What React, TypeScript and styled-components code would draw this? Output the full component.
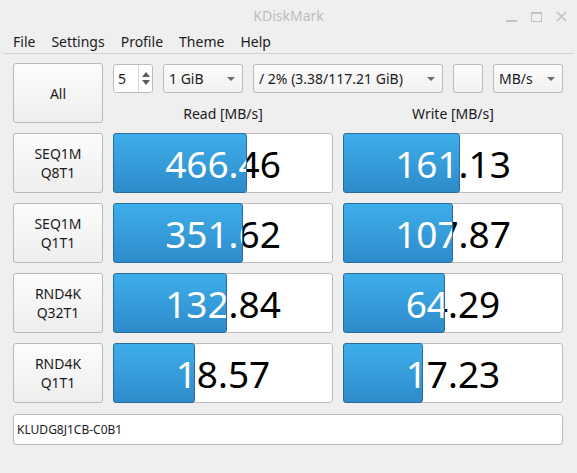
import React from 'react'
import styled, { createGlobalStyle } from 'styled-components'

const GlobalStyle = createGlobalStyle`
  html, body {
    margin: 0;
    padding: 0;
    background: #efefef;
  }
  body {
    font-family: "Noto Sans", "Open Sans", "DejaVu Sans", sans-serif;
    font-size: 14px;
    color: #232629;
  }
`

const Window = styled.div`
  width: 577px;
  height: 473px;
  background: #efefef;
  display: flex;
  flex-direction: column;
  overflow: hidden;
`

const TitleBar = styled.div`
  height: 30px;
  display: grid;
  grid-template-columns: 1fr auto 1fr;
  align-items: center;
  padding: 0 10px 0 10px;
`

const Title = styled.div`
  grid-column: 2;
  color: #bdbdbd;
  font-size: 14px;
  padding-top: 1px;
`

const WinControls = styled.div`
  justify-self: end;
  display: flex;
  gap: 14px;
  align-items: center;
  padding-top: 2px;
`

const MenuBar = styled.div`
  height: 24px;
  display: flex;
  align-items: center;
  padding-left: 2px;
  margin: 0 3px;
  border-bottom: 1px solid #d3d3d3;
  box-sizing: border-box;
`

const MenuItem = styled.div`
  padding: 0 8px;
  color: #1b1b1b;
  line-height: 24px;
`

const Content = styled.div`
  padding: 9px 14px 0 13px;
  display: flex;
  flex-direction: column;
`

const Grid = styled.div`
  display: grid;
  grid-template-columns: 90px 220px 220px;
  grid-template-rows: 30px 20px 60px 60px 60px 60px;
  column-gap: 10px;
  row-gap: 10px;
`

const PushButton = styled.div<{ $span?: number }>`
  grid-row: ${({ $span }) => ($span ? `span ${$span}` : 'auto')};
  box-sizing: border-box;
  border: 1px solid #b9b9b9;
  border-radius: 3px;
  background: linear-gradient(#fcfcfc, #eeeeee);
  display: flex;
  align-items: center;
  justify-content: center;
  text-align: center;
  line-height: 19px;
  color: #1b1b1b;
`

const Controls = styled.div`
  grid-column: 2 / span 2;
  display: flex;
  gap: 10px;
`

const SpinBox = styled.div`
  width: 40px;
  box-sizing: border-box;
  border: 1px solid #bcbcbc;
  border-radius: 3px;
  background: #fff;
  display: flex;
  margin-top: 1px;
`

const SpinValue = styled.div`
  flex: 1;
  padding-left: 4px;
  display: flex;
  align-items: center;
  color: #1b1b1b;
`

const SpinArrows = styled.div`
  width: 13px;
  border-left: 1px solid #d6d6d6;
  display: flex;
  flex-direction: column;
  align-items: center;
  justify-content: center;
  gap: 3px;
`

const Combo = styled.div<{ $w: number }>`
  width: ${({ $w }) => $w}px;
  box-sizing: border-box;
  border: 1px solid #bcbcbc;
  border-radius: 3px;
  background: linear-gradient(#fcfcfc, #f1f1f1);
  display: flex;
  align-items: center;
  justify-content: space-between;
  padding: 0 7px 0 5px;
  margin-top: 1px;
  color: #1b1b1b;
  white-space: nowrap;
`

const ColumnLabel = styled.div`
  display: flex;
  align-items: center;
  justify-content: center;
  color: #1b1b1b;
`

const Meter = styled.div`
  position: relative;
  box-sizing: border-box;
  border: 1px solid #bdbdbd;
  border-radius: 3px;
  background: #fff;
  display: flex;
  align-items: center;
  justify-content: center;
  font-size: 37px;
  color: #000;
`

const Fill = styled.div`
  position: absolute;
  left: -1px;
  top: -1px;
  bottom: -1px;
  box-sizing: border-box;
  border: 1px solid #2a6c9b;
  border-radius: 3px;
  background: linear-gradient(#3daeea, #2e8bca);
  overflow: hidden;
`

const FillText = styled.div`
  position: absolute;
  left: 0;
  top: 0;
  width: 218px;
  height: 58px;
  display: flex;
  align-items: center;
  justify-content: center;
  color: #fff;
`

const Comment = styled.div`
  margin-top: 11px;
  height: 31px;
  box-sizing: border-box;
  border: 1px solid #bcbcbc;
  border-radius: 3px;
  background: #fff;
  display: flex;
  align-items: center;
  padding-left: 3px;
  font-size: 12px;
  color: #1b1b1b;
`

const Arrow = ({ up }: { up?: boolean }) => (
  <svg width="8" height="5" viewBox="0 0 8 5">
    <path d={up ? 'M0 5 L4 0 L8 5 Z' : 'M0 0 L8 0 L4 5 Z'} fill="#5b5b5b" />
  </svg>
)

const DropArrow = () => (
  <svg width="8" height="4" viewBox="0 0 8 4">
    <path d="M0 0 L8 0 L4 4 Z" fill="#6b6b6b" />
  </svg>
)

const results = [
  { name: ['SEQ1M', 'Q8T1'], read: 466.46, write: 161.13 },
  { name: ['SEQ1M', 'Q1T1'], read: 351.62, write: 107.87 },
  { name: ['RND4K', 'Q32T1'], read: 132.84, write: 64.29 },
  { name: ['RND4K', 'Q1T1'], read: 18.57, write: 17.23 },
]

// log scale like the app's progress bars
const barWidth = (v: number) => Math.round(((Math.log10(v) + 0.9) / 5.85) * 220)

const Result = ({ value }: { value: number }) => {
  const text = value.toFixed(2)
  return (
    <Meter>
      {text}
      <Fill style={{ width: barWidth(value) }}>
        <FillText>{text}</FillText>
      </Fill>
    </Meter>
  )
}

export default function App() {
  return (
    <Window>
      <GlobalStyle />
      <TitleBar>
        <Title>KDiskMark</Title>
        <WinControls>
          <svg width="11" height="11" viewBox="0 0 11 11">
            <rect x="0" y="9" width="11" height="2" fill="#c2c2c2" />
          </svg>
          <svg width="11" height="11" viewBox="0 0 11 11">
            <rect x="0.5" y="1.5" width="10" height="9" fill="none" stroke="#c2c2c2" />
            <rect x="0" y="1" width="11" height="2" fill="#c2c2c2" />
          </svg>
          <svg width="11" height="11" viewBox="0 0 11 11">
            <path d="M1 1 L10 10 M10 1 L1 10" stroke="#c2c2c2" strokeWidth="1.6" />
          </svg>
        </WinControls>
      </TitleBar>
      <MenuBar>
        {['File', 'Settings', 'Profile', 'Theme', 'Help'].map(m => (
          <MenuItem key={m}>{m}</MenuItem>
        ))}
      </MenuBar>
      <Content>
        <Grid>
          <PushButton $span={2}>All</PushButton>
          <Controls>
            <SpinBox>
              <SpinValue>5</SpinValue>
              <SpinArrows>
                <Arrow up />
                <Arrow />
              </SpinArrows>
            </SpinBox>
            <Combo $w={80}>
              1 GiB
              <DropArrow />
            </Combo>
            <Combo $w={190}>
              / 2% (3.38/117.21 GiB)
              <DropArrow />
            </Combo>
            <Combo $w={30} />
            <Combo $w={70}>
              MB/s
              <DropArrow />
            </Combo>
          </Controls>
          <ColumnLabel>Read [MB/s]</ColumnLabel>
          <ColumnLabel>Write [MB/s]</ColumnLabel>
          {results.map(r => (
            <React.Fragment key={r.name.join('')}>
              <PushButton>
                {r.name[0]}
                <br />
                {r.name[1]}
              </PushButton>
              <Result value={r.read} />
              <Result value={r.write} />
            </React.Fragment>
          ))}
        </Grid>
        <Comment>KLUDG8J1CB-C0B1</Comment>
      </Content>
    </Window>
  )
}
